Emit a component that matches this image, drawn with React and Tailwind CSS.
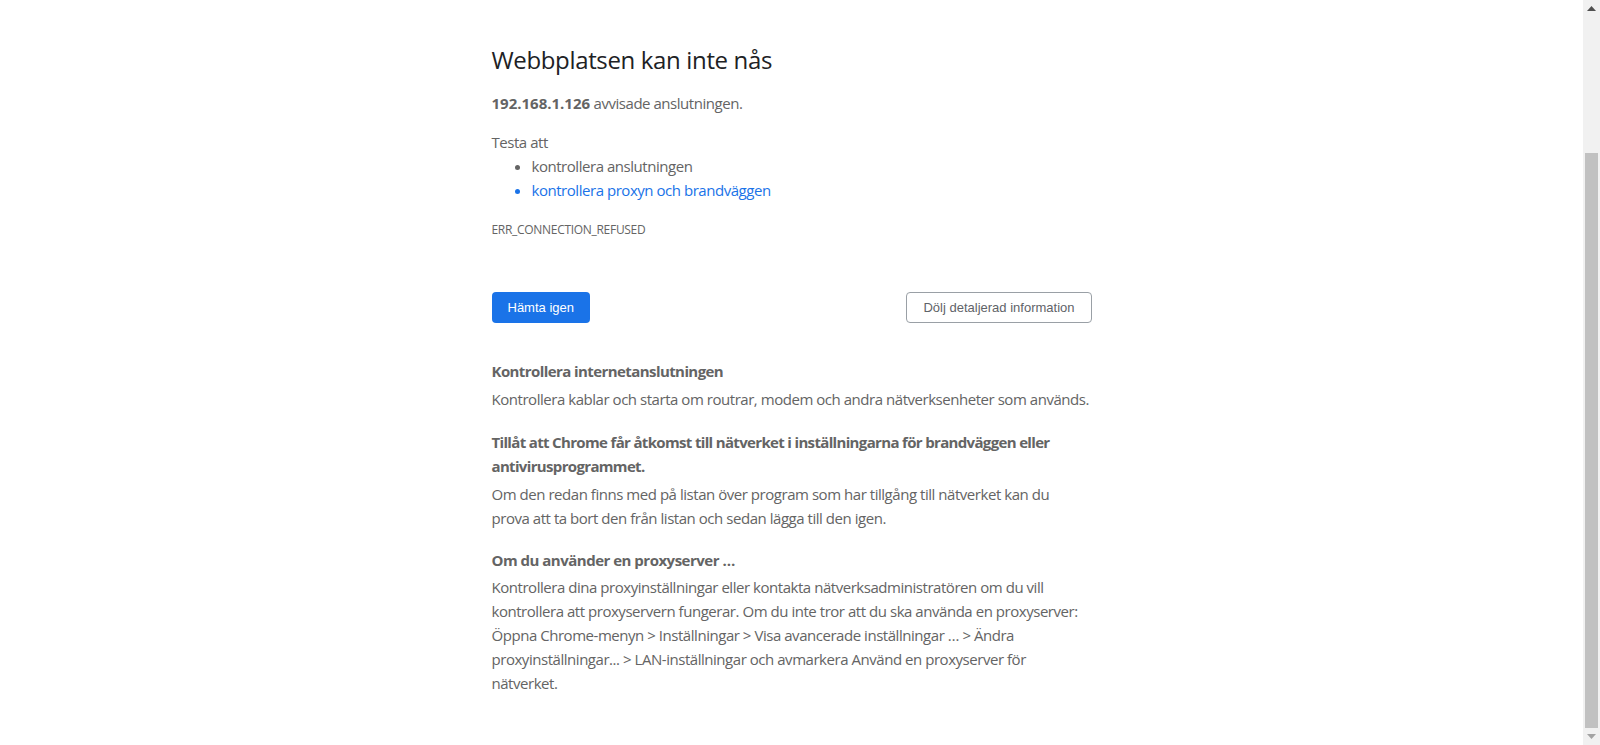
import React from "react";

function Scrollbar() {
  return (
    <div className="w-[17px] h-screen bg-[#f1f1f1] flex flex-col shrink-0">
      <div className="h-[17px] flex items-center justify-center">
        <svg width="9" height="5" viewBox="0 0 9 5">
          <polygon points="4.5,0 9,5 0,5" fill="#505050" />
        </svg>
      </div>
      <div className="h-[136px]" />
      <div className="flex-1 mx-[2px] bg-[#c1c1c1]" />
      <div className="h-[17px] flex items-center justify-center">
        <svg width="9" height="5" viewBox="0 0 9 5">
          <polygon points="0,0 9,0 4.5,5" fill="#a3a3a3" />
        </svg>
      </div>
    </div>
  );
}

function App() {
  const body = { fontFamily: '"Segoe UI", "Open Sans", "Noto Sans", sans-serif' };
  const btn = { fontFamily: '"Liberation Sans", Arial, sans-serif' };

  return (
    <div className="flex h-screen w-full overflow-hidden bg-white">
      <div className="flex-1 min-w-0">
        <div
          className="w-[600px] mx-auto pt-[45px] text-[15px] leading-[24px] text-[#646464] tracking-[-0.46px]"
          style={body}
        >
          <h1 className="text-[24px] leading-[30px] font-medium text-[#202124] mb-[16px] tracking-[-0.35px]">
            Webbplatsen kan inte nås
          </h1>
          <p className="mb-[15px]">
            <span className="font-bold tracking-[0px]">192.168.1.126</span> avvisade anslutningen.
          </p>
          <p>Testa att</p>
          <ul className="list-disc pl-[40px] mb-[18px]">
            <li>kontrollera anslutningen</li>
            <li className="text-[#1a73e8]">kontrollera proxyn och brandväggen</li>
          </ul>
          <div className="text-[12px] leading-[19px] uppercase tracking-[-0.3px]">
            ERR_CONNECTION_REFUSED
          </div>

          <div className="flex justify-between items-start mt-[53px] tracking-normal" style={btn}>
            <button className="h-[31px] px-[16px] rounded-[4px] bg-[#1a73e8] text-white text-[13px] font-medium">
              Hämta igen
            </button>
            <button className="h-[31px] px-[16px] rounded-[4px] border border-[#9aa0a6] bg-white text-[#5f6368] text-[13px] font-medium">
              Dölj detaljerad information
            </button>
          </div>

          <div className="mt-[36px] whitespace-nowrap">
            <p className="font-bold mb-[4px] tracking-[-0.58px]">Kontrollera internetanslutningen</p>
            <p className="mb-[19px]">
              Kontrollera kablar och starta om routrar, modem och andra nätverksenheter som används.
            </p>
            <p className="font-bold mb-[4px] tracking-[-0.66px]">
              Tillåt att Chrome får åtkomst till nätverket i inställningarna för brandväggen eller
              <br />
              antivirusprogrammet.
            </p>
            <p className="mb-[18px]">
              Om den redan finns med på listan över program som har tillgång till nätverket kan du
              <br />
              prova att ta bort den från listan och sedan lägga till den igen.
            </p>
            <p className="font-bold mb-[3px] tracking-[-0.5px]">Om du använder en proxyserver …</p>
            <p>
              Kontrollera dina proxyinställningar eller kontakta nätverksadministratören om du vill
              <br />
              kontrollera att proxyservern fungerar. Om du inte tror att du ska använda en proxyserver:
              <br />
              Öppna Chrome-menyn &gt; Inställningar &gt; Visa avancerade inställningar … &gt; Ändra
              <br />
              proxyinställningar... &gt; LAN-inställningar och avmarkera Använd en proxyserver för
              <br />
              nätverket.
            </p>
          </div>
        </div>
      </div>
      <Scrollbar />
    </div>
  );
}

export default App;
